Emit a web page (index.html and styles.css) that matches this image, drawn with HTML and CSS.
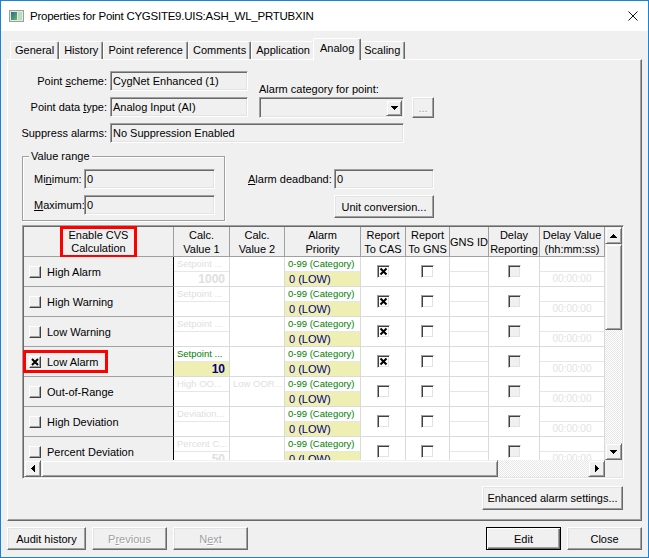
FILE: index.html
```html
<!DOCTYPE html>
<html lang="en">
<head>
<meta charset="utf-8">
<title>Properties for Point</title>
<link rel="stylesheet" href="styles.css">
</head>
<body>
<div class="window">
  <div class="titlebar">
    <svg class="app-icon" width="15" height="12" viewBox="0 0 15 12">
      <defs><linearGradient id="g1" x1="0" y1="0" x2="1" y2="1"><stop offset="0" stop-color="#2c6a8a"/><stop offset="1" stop-color="#62b86a"/></linearGradient></defs>
      <rect x="0.5" y="0.5" width="14" height="11" fill="#e2e8e2" stroke="#9aa09a"/>
      <rect x="2" y="2" width="6" height="8" fill="url(#g1)"/>
      <rect x="9" y="2" width="4" height="8" fill="#bcdcbc"/>
    </svg>
    <span class="title">Properties for Point CYGSITE9.UIS:ASH_WL_PRTUBXIN</span>
    <svg class="close-x" width="10" height="10" viewBox="0 0 10 10"><path d="M0.5 0.5L9.5 9.5M9.5 0.5L0.5 9.5" stroke="#111" stroke-width="1"/></svg>
  </div>
  <div class="client">
    <div class="tabs">
      <div class="tab">General</div>
      <div class="tab">History</div>
      <div class="tab">Point reference</div>
      <div class="tab">Comments</div>
      <div class="tab">Application</div>
      <div class="tab active">Analog</div>
      <div class="tab">Scaling</div>
    </div>
    <div class="panel">
      <div class="top-form">
        <div class="lbl r1">Point <u>s</u>cheme:</div>
        <div class="field f-scheme">CygNet Enhanced (1)</div>
        <div class="cat-lbl">Alarm category for point:</div>
        <div class="lbl r2">Point data <u>t</u>ype:</div>
        <div class="field f-type">Analog Input (AI)</div>
        <div class="combo"><span class="combo-btn"><svg width="7" height="4" viewBox="0 0 7 4"><path d="M0 0h7v1h-1v1h-1v1h-1v1h-1v-1h-1v-1h-1v-1h-1z" fill="#000"/></svg></span></div>
        <div class="btn dots disabled">...</div>
        <div class="lbl r3">Suppress alarms:</div>
        <div class="field f-supp">No Suppression Enabled</div>
      </div>

      <div class="mid">
        <div class="group">
          <div class="legend">Value range</div>
          <div class="grow"><span class="glbl">Mi<u>n</u>imum:</span><div class="field gfield">0</div></div>
          <div class="grow"><span class="glbl"><u>M</u>aximum:</span><div class="field gfield">0</div></div>
        </div>
        <div class="deadband">
          <div class="db-lbl"><u>A</u>larm deadband:</div>
          <div class="field">0</div>
          <div class="btn unit">Unit conversion...</div>
        </div>
      </div>

      <div class="grid-frame">
        <div class="grid-view">
          <div class="cols gh">
            <div class="hc"><span class="redbox">Enable CVS<br>Calculation</span></div>
            <div class="hc">Calc.<br>Value 1</div>
            <div class="hc">Calc.<br>Value 2</div>
            <div class="hc">Alarm<br>Priority</div>
            <div class="hc">Report<br>To CAS</div>
            <div class="hc">Report<br>To GNS</div>
            <div class="hc">GNS ID</div>
            <div class="hc">Delay<br>Reporting</div>
            <div class="hc">Delay Value<br>(hh:mm:ss)</div>
          </div>
          <div class="cols gb">
            <!-- High Alarm -->
            <div class="rc c1"><span class="cb3"></span><span class="rname">High Alarm</span></div>
            <div class="rc split"><div class="t dim">Setpoint ...</div><div class="b num dim">1000</div></div>
            <div class="rc split nomid"><div class="t"></div><div class="b"></div></div>
            <div class="rc split"><div class="t cat">0-99 (Category)</div><div class="b low">0 (LOW)</div></div>
            <div class="rc chk"><span class="cbs"><svg width="9" height="9" viewBox="0 0 9 9"><path d="M1.5 1.5L7.5 7.5M7.5 1.5L1.5 7.5" stroke="#000" stroke-width="2"/></svg></span></div>
            <div class="rc chk"><span class="cbs"></span></div>
            <div class="rc split"><div class="t"></div><div class="b"></div></div>
            <div class="rc chk"><span class="cbs dis"></span></div>
            <div class="rc split"><div class="t"></div><div class="b time">00:00:00</div></div>
            <!-- High Warning -->
            <div class="rc c1"><span class="cb3"></span><span class="rname">High Warning</span></div>
            <div class="rc split"><div class="t dim">Setpoint ...</div><div class="b num dim"></div></div>
            <div class="rc split nomid"><div class="t"></div><div class="b"></div></div>
            <div class="rc split"><div class="t cat">0-99 (Category)</div><div class="b low">0 (LOW)</div></div>
            <div class="rc chk"><span class="cbs"><svg width="9" height="9" viewBox="0 0 9 9"><path d="M1.5 1.5L7.5 7.5M7.5 1.5L1.5 7.5" stroke="#000" stroke-width="2"/></svg></span></div>
            <div class="rc chk"><span class="cbs"></span></div>
            <div class="rc split"><div class="t"></div><div class="b"></div></div>
            <div class="rc chk"><span class="cbs dis"></span></div>
            <div class="rc split"><div class="t"></div><div class="b time">00:00:00</div></div>
            <!-- Low Warning -->
            <div class="rc c1"><span class="cb3"></span><span class="rname">Low Warning</span></div>
            <div class="rc split"><div class="t dim">Setpoint ...</div><div class="b num dim"></div></div>
            <div class="rc split nomid"><div class="t"></div><div class="b"></div></div>
            <div class="rc split"><div class="t cat">0-99 (Category)</div><div class="b low">0 (LOW)</div></div>
            <div class="rc chk"><span class="cbs"><svg width="9" height="9" viewBox="0 0 9 9"><path d="M1.5 1.5L7.5 7.5M7.5 1.5L1.5 7.5" stroke="#000" stroke-width="2"/></svg></span></div>
            <div class="rc chk"><span class="cbs"></span></div>
            <div class="rc split"><div class="t"></div><div class="b"></div></div>
            <div class="rc chk"><span class="cbs dis"></span></div>
            <div class="rc split"><div class="t"></div><div class="b time">00:00:00</div></div>
            <!-- Low Alarm -->
            <div class="rc c1"><span class="mark"><span class="cb3"><svg width="8" height="8" viewBox="0 0 8 8"><path d="M1 1L7 7M7 1L1 7" stroke="#000" stroke-width="2"/></svg></span><span class="rname">Low Alarm</span></span></div>
            <div class="rc split"><div class="t cat">Setpoint ...</div><div class="b num hl">10</div></div>
            <div class="rc split nomid"><div class="t"></div><div class="b"></div></div>
            <div class="rc split"><div class="t cat">0-99 (Category)</div><div class="b low">0 (LOW)</div></div>
            <div class="rc chk"><span class="cbs"><svg width="9" height="9" viewBox="0 0 9 9"><path d="M1.5 1.5L7.5 7.5M7.5 1.5L1.5 7.5" stroke="#000" stroke-width="2"/></svg></span></div>
            <div class="rc chk"><span class="cbs"></span></div>
            <div class="rc split"><div class="t"></div><div class="b"></div></div>
            <div class="rc chk"><span class="cbs dis"></span></div>
            <div class="rc split"><div class="t"></div><div class="b time">00:00:00</div></div>
            <!-- Out-of-Range -->
            <div class="rc c1"><span class="cb3"></span><span class="rname">Out-of-Range</span></div>
            <div class="rc split"><div class="t dim">High OO...</div><div class="b num dim"></div></div>
            <div class="rc split nomid"><div class="t dim">Low OOR...</div><div class="b"></div></div>
            <div class="rc split"><div class="t cat">0-99 (Category)</div><div class="b low">0 (LOW)</div></div>
            <div class="rc chk"><span class="cbs"></span></div>
            <div class="rc chk"><span class="cbs"></span></div>
            <div class="rc split"><div class="t"></div><div class="b"></div></div>
            <div class="rc chk"><span class="cbs dis"></span></div>
            <div class="rc split"><div class="t"></div><div class="b time">00:00:00</div></div>
            <!-- High Deviation -->
            <div class="rc c1"><span class="cb3"></span><span class="rname">High Deviation</span></div>
            <div class="rc split"><div class="t dim">Deviation...</div><div class="b num dim"></div></div>
            <div class="rc split nomid"><div class="t"></div><div class="b"></div></div>
            <div class="rc split"><div class="t cat">0-99 (Category)</div><div class="b low">0 (LOW)</div></div>
            <div class="rc chk"><span class="cbs"></span></div>
            <div class="rc chk"><span class="cbs"></span></div>
            <div class="rc split"><div class="t"></div><div class="b"></div></div>
            <div class="rc chk"><span class="cbs dis"></span></div>
            <div class="rc split"><div class="t"></div><div class="b time">00:00:00</div></div>
            <!-- Percent Deviation -->
            <div class="rc c1"><span class="cb3"></span><span class="rname">Percent Deviation</span></div>
            <div class="rc split"><div class="t dim">Percent C...</div><div class="b num dim">50</div></div>
            <div class="rc split nomid"><div class="t"></div><div class="b"></div></div>
            <div class="rc split"><div class="t cat">0-99 (Category)</div><div class="b low">0 (LOW)</div></div>
            <div class="rc chk"><span class="cbs"></span></div>
            <div class="rc chk"><span class="cbs"></span></div>
            <div class="rc split"><div class="t"></div><div class="b"></div></div>
            <div class="rc chk"><span class="cbs dis"></span></div>
            <div class="rc split"><div class="t"></div><div class="b time">00:00:00</div></div>
          </div>
        </div>
        <div class="vscroll">
          <div class="sbtn"><svg width="7" height="4" viewBox="0 0 7 4"><path d="M3 0h1v1h1v1h1v1h1v1H0V3h1V2h1V1h1z" fill="#000"/></svg></div>
          <div class="thumb vthumb"></div>
          <div class="track"></div>
          <div class="sbtn"><svg width="7" height="4" viewBox="0 0 7 4"><path d="M0 0h7v1h-1v1h-1v1h-1v1h-1v-1h-1v-1h-1v-1h-1z" fill="#000"/></svg></div>
        </div>
        <div class="hscroll">
          <div class="sbtn"><svg width="4" height="7" viewBox="0 0 4 7"><path d="M3 0h1v7h-1v-1h-1v-1h-1v-1h-1v-1h1v-1h1v-1h1z" fill="#000"/></svg></div>
          <div class="thumb hthumb"></div>
          <div class="track"></div>
          <div class="sbtn"><svg width="4" height="7" viewBox="0 0 4 7"><path d="M0 0h1v1h1v1h1v1h1v1h-1v1h-1v1h-1v1h-1z" fill="#000"/></svg></div>
        </div>
        <div class="corner"></div>
      </div>

      <div class="enh">
        <div class="btn enh-btn">Enhanced alarm settings...</div>
      </div>
    </div>
    <div class="footer">
      <div class="btn audit">Audit history</div>
      <div class="btn fbtn disabled">P<u>r</u>evious</div>
      <div class="btn fbtn disabled">N<u>e</u>xt</div>
      <div class="btn fbtn default edit">Edit</div>
      <div class="btn fbtn">Close</div>
    </div>
  </div>
</div>
</body>
</html>
```

FILE: styles.css
```css
* { box-sizing: border-box; }
html, body { margin: 0; padding: 0; }
body {
  font-family: "Liberation Sans", Arial, sans-serif;
  font-size: 11px;
  color: #000;
  background: #fff;
}
u { text-decoration: underline; text-underline-offset: 1px; }

.window {
  width: 649px;
  height: 558px;
  border: 1px solid #1883d7;
  background: #f0f0f0;
  display: flex;
  flex-direction: column;
  overflow: hidden;
}

/* title bar */
.titlebar {
  flex: none;
  height: 30px;
  background: #fff;
  display: flex;
  align-items: center;
}
.app-icon { margin-left: 8px; flex: none; }
.title {
  margin-left: 6px;
  font-size: 11.5px;
  letter-spacing: -0.25px;
  color: #000;
  white-space: nowrap;
}
.close-x { margin-left: auto; margin-right: 10px; flex: none; }

/* client */
.client {
  flex: 1;
  padding: 7px 6px 0 6px;
  display: flex;
  flex-direction: column;
}

/* tabs */
.tabs {
  display: flex;
  align-items: flex-end;
  height: 21px;
  margin-left: 3px;
}
.tab {
  height: 18px;
  line-height: 16px;
  padding: 0 4px;
  border: 1px solid;
  border-bottom: 0;
  border-color: #fff #696969 #fff #fff;
  box-shadow: inset -1px 0 #a0a0a0;
  border-radius: 2px 2px 0 0;
  white-space: nowrap;
  background: #f0f0f0;
}
.tab.active {
  height: 22px;
  margin: 0 -2px -1px;
  padding: 1px 6px 0;
  line-height: 17px;
  position: relative;
  z-index: 1;
}

/* panel */
.panel {
  height: 462px;
  border: 1px solid;
  border-color: #fff #696969 #696969 #fff;
  box-shadow: inset -1px -1px #a0a0a0;
  display: flex;
  flex-direction: column;
}

/* common controls */
.field {
  height: 20px;
  border: 1px solid;
  border-color: #a0a0a0 #fff #fff #a0a0a0;
  box-shadow: inset 1px 1px #696969, inset -1px -1px #e3e3e3;
  background: #f0f0f0;
  padding: 0 2px;
  line-height: 18px;
  white-space: nowrap;
  overflow: hidden;
}
.btn {
  border: 1px solid;
  border-color: #fff #696969 #696969 #fff;
  box-shadow: inset -1px -1px #a0a0a0, inset 1px 1px #e3e3e3;
  background: #f0f0f0;
  display: flex;
  align-items: center;
  justify-content: center;
  white-space: nowrap;
}
.btn.disabled { color: #a0a0a0; text-shadow: 1px 1px 0 #fff; }
.btn.default {
  border-color: #000;
  box-shadow: inset 1px 1px #fff, inset -1px -1px #696969, inset -2px -2px #a0a0a0;
}

/* top form */
.top-form {
  display: grid;
  grid-template-columns: 102px 138px 11px 145px 8px 22px;
  grid-template-rows: 20px 20px 20px;
  row-gap: 6px;
  margin-top: 11px;
}
.lbl {
  grid-column: 1;
  align-self: center;
  text-align: right;
  padding-right: 3px;
  white-space: nowrap;
}
.r1 { grid-row: 1; }
.r2 { grid-row: 2; }
.r3 { grid-row: 3; }
.f-scheme { grid-column: 2; grid-row: 1; }
.f-type { grid-column: 2; grid-row: 2; }
.f-supp { grid-column: 2 / 5; grid-row: 3; }
.cat-lbl {
  grid-column: 4 / 7;
  grid-row: 1;
  align-self: end;
  margin-bottom: -5px;
  line-height: 13px;
  white-space: nowrap;
}
.combo {
  grid-column: 4;
  grid-row: 2;
  height: 21px;
  border: 1px solid;
  border-color: #a0a0a0 #fff #fff #a0a0a0;
  box-shadow: inset 1px 1px #696969, inset -1px -1px #e3e3e3;
  background: #f0f0f0;
  display: flex;
  align-items: center;
  justify-content: flex-end;
  padding-right: 1px;
}
.combo-btn {
  width: 16px;
  height: 16px;
  border: 1px solid;
  border-color: #f0f0f0 #696969 #696969 #f0f0f0;
  box-shadow: inset 1px 1px #fff, inset -1px -1px #a0a0a0;
  display: flex;
  align-items: center;
  justify-content: center;
}
.dots { grid-column: 6; grid-row: 2; height: 21px; }

/* middle */
.mid { display: flex; margin-top: 13px; }
.group {
  margin-left: 14px;
  width: 203px;
  height: 65px;
  border: 1px solid #a0a0a0;
  box-shadow: inset 1px 1px #fff, 1px 1px #fff;
}
.legend {
  width: fit-content;
  margin: -8px 0 0 6px;
  padding: 0 2px;
  line-height: 14px;
  background: #f0f0f0;
}
.grow {
  display: flex;
  align-items: center;
  height: 20px;
  padding-left: 11px;
  margin-top: 6px;
}
.glbl { width: 50px; white-space: nowrap; }
.gfield { width: 131px; }
.deadband {
  margin-left: 23px;
  margin-top: 13px;
  display: grid;
  grid-template-columns: 86px 100px;
  grid-template-rows: 20px 23px;
  row-gap: 6px;
  align-content: start;
}
.db-lbl { align-self: center; white-space: nowrap; }
.unit { grid-column: 2; grid-row: 2; }

/* alarm grid */
.grid-frame {
  margin: 4px 0 0 14px;
  width: 602px;
  height: 254px;
  padding: 1px;
  border: 1px solid;
  border-color: #a0a0a0 #fff #fff #a0a0a0;
  box-shadow: inset 1px 1px #696969, inset -1px -1px #e3e3e3;
  display: grid;
  grid-template-columns: 581px 17px;
  grid-template-rows: 233px 17px;
  background: #fff;
}
.grid-view { display: flex; flex-direction: column; }
.cols {
  display: grid;
  grid-template-columns: 150px 56px 55px 76px 45px 44px 39px 51px 65px;
}
.gh { grid-template-rows: 30px; flex: none; }
.gb {
  grid-auto-rows: 30px;
  height: 203px;
  overflow-y: clip;
  overflow-x: visible;
}
.hc {
  background: #f0f0f0;
  border-right: 1px solid #a0a0a0;
  border-bottom: 1px solid #a0a0a0;
  display: flex;
  align-items: center;
  justify-content: center;
  text-align: center;
  line-height: 14px;
  white-space: nowrap;
}
.redbox {
  display: block;
  width: 77px;
  border: 3px solid #f00;
  line-height: 13px;
}
.rc {
  background: #fff;
  border-right: 1px solid #dadada;
  border-bottom: 1px solid #dadada;
  min-width: 0;
}
.rc.c1 {
  background: #f0f0f0;
  border-right-color: #000;
  border-bottom-color: #a0a0a0;
  display: flex;
  align-items: center;
  padding-left: 5px;
  white-space: nowrap;
}
.cb3 {
  flex: none;
  width: 12px;
  height: 12px;
  border: 1px solid;
  border-color: #fff #404040 #404040 #fff;
  box-shadow: inset -1px -1px #a0a0a0;
  background: #f0f0f0;
  display: flex;
  align-items: center;
  justify-content: center;
}
.rname { margin-left: 6px; }
.mark {
  display: flex;
  align-items: center;
  width: 85px;
  height: 23px;
  border: 3px solid #f00;
  margin-left: -6px;
  padding-left: 3px;
}
.split { display: flex; flex-direction: column; }
.t {
  height: 15px;
  flex: none;
  border-bottom: 1px solid #e6e6e6;
  font-size: 9.5px;
  line-height: 14px;
  padding-left: 3px;
  white-space: nowrap;
  overflow: hidden;
}
.nomid .t { border-bottom-color: transparent; }
.b { flex: 1; line-height: 14px; white-space: nowrap; overflow: hidden; }
.num {
  text-align: right;
  font-weight: bold;
  font-size: 12px;
  padding-right: 4px;
}
.dim { color: #e0e0e0; }
.cat { color: #008000; }
.low { background: #efefb4; color: #000080; padding-left: 4px; }
.hl { background: #efefb4; color: #000080; }
.time { text-align: center; color: #e3e3e3; font-size: 10px; }
.chk { display: flex; align-items: center; justify-content: center; }
.cbs {
  width: 13px;
  height: 13px;
  border: 1px solid;
  border-color: #a0a0a0 #fff #fff #a0a0a0;
  box-shadow: inset 1px 1px #404040, inset -1px -1px #e3e3e3;
  background: #fff;
  display: flex;
  align-items: center;
  justify-content: center;
}
.cbs.dis { background: #f0f0f0; }

/* scrollbars */
.vscroll, .hscroll {
  display: flex;
  background: repeating-conic-gradient(#ffffff 0 25%, #e6e6e6 0 50%) 0 0 / 2px 2px;
}
.vscroll { flex-direction: column; }
.sbtn, .thumb {
  flex: none;
  background: #f0f0f0;
  border: 1px solid;
  border-color: #f0f0f0 #696969 #696969 #f0f0f0;
  box-shadow: inset 1px 1px #fff, inset -1px -1px #a0a0a0;
}
.sbtn {
  width: 17px;
  height: 17px;
  display: flex;
  align-items: center;
  justify-content: center;
}
.vthumb { height: 86px; }
.hthumb { width: 457px; }
.track { flex: 1; }
.corner { background: #f0f0f0; }

.enh {
  display: flex;
  justify-content: flex-end;
  padding-right: 18px;
  margin-top: 7px;
}
.enh-btn { width: 141px; height: 24px; }

/* footer */
.footer {
  display: flex;
  gap: 6px;
  margin-top: 6px;
}
.footer .btn { height: 23px; }
.audit { width: 79px; }
.fbtn { width: 75px; }
.edit { margin-left: auto; }
```
